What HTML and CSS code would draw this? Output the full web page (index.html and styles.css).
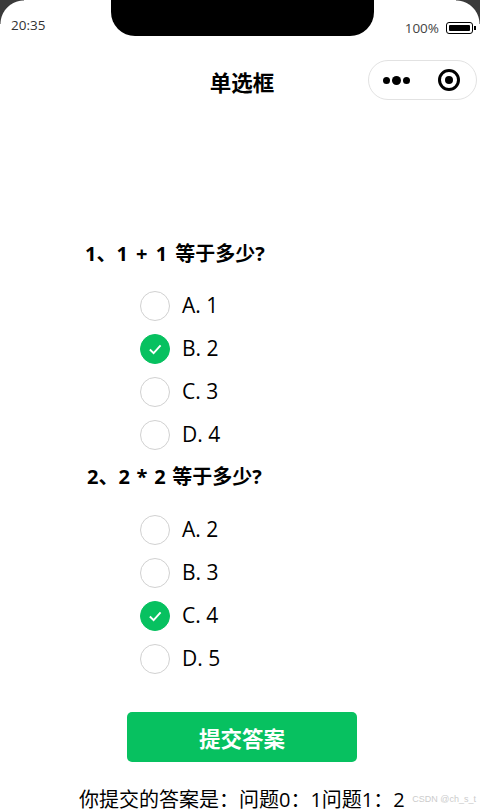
FILE: index.html
```html
<!DOCTYPE html>
<html lang="zh-CN">
<head>
    <meta charset="UTF-8">
    <meta name="viewport" content="width=device-width, initial-scale=1.0">
    <title>单选框</title>
    <link rel="stylesheet" href="styles.css">
</head>
<body>
    <div class="phone">
        <div class="status-bar">
            <span class="time">20:35</span>
            <div class="notch"></div>
            <div class="battery-box">
                <span class="percent">100%</span>
                <span class="battery"><span class="battery-level"></span></span>
                <span class="battery-tip"></span>
            </div>
        </div>

        <div class="nav-bar">
            <h1 class="nav-title">单选框</h1>
            <div class="capsule">
                <div class="dots">
                    <span class="dot"></span>
                    <span class="dot dot-big"></span>
                    <span class="dot"></span>
                </div>
                <div class="target"><span class="target-inner"></span></div>
            </div>
        </div>

        <div class="quiz">
            <h2 class="question q-one">1、1 + 1 等于多少?</h2>
            <div class="options">
                <div class="option"><span class="radio"></span><span class="label">A. 1</span></div>
                <div class="option">
                    <span class="radio radio-on">
                        <svg viewBox="0 0 30 30" class="check"><path d="M9.5 15.5l4 4 7.5-8.5"/></svg>
                    </span>
                    <span class="label">B. 2</span>
                </div>
                <div class="option"><span class="radio"></span><span class="label">C. 3</span></div>
                <div class="option"><span class="radio"></span><span class="label">D. 4</span></div>
            </div>

            <h2 class="question q-two">2、2 * 2 等于多少?</h2>
            <div class="options">
                <div class="option"><span class="radio"></span><span class="label">A. 2</span></div>
                <div class="option"><span class="radio"></span><span class="label">B. 3</span></div>
                <div class="option">
                    <span class="radio radio-on">
                        <svg viewBox="0 0 30 30" class="check"><path d="M9.5 15.5l4 4 7.5-8.5"/></svg>
                    </span>
                    <span class="label">C. 4</span>
                </div>
                <div class="option"><span class="radio"></span><span class="label">D. 5</span></div>
            </div>
        </div>

        <button class="submit">提交答案</button>
        <p class="answer">你提交的答案是：问题0：1问题1：2</p>
        <span class="watermark">CSDN @ch_s_t</span>
    </div>
</body>
</html>
```

FILE: styles.css
```css
* {
    box-sizing: border-box;
}
html, body {
    margin: 0;
    padding: 0;
}
body {
    width: 480px;
    height: 810px;
    overflow: hidden;
    font-family: "Open Sans", "Noto Sans CJK SC", sans-serif;
    background-color: #fff;
    color: #000;
}
.phone {
    position: relative;
    width: 480px;
    height: 810px;
    overflow: hidden;
}
.phone::before, .phone::after {
    content: "";
    position: absolute;
    top: 0;
    width: 24px;
    height: 24px;
}
.phone::before {
    left: 0;
    background: radial-gradient(circle at 100% 100%, transparent 23px, #3a3a3a 24px);
}
.phone::after {
    right: 0;
    background: radial-gradient(circle at 0 100%, transparent 23px, #3a3a3a 24px);
}
.status-bar {
    display: flex;
    justify-content: space-between;
    height: 36px;
    padding: 0 4px 0 11px;
}
.time {
    font-size: 13.5px;
    line-height: 19px;
    margin-top: 16px;
    color: #333;
}
.notch {
    position: absolute;
    top: 0;
    left: 111px;
    width: 263px;
    height: 36px;
    background-color: #000;
    border-radius: 0 0 24px 24px;
}
.battery-box {
    display: flex;
    align-items: center;
    height: 16px;
    margin-top: 20px;
}
.percent {
    font-size: 13.5px;
    color: #444;
    margin-right: 7px;
}
.battery {
    display: block;
    width: 27px;
    height: 12px;
    padding: 2px;
    border: 1px solid #000;
    border-radius: 3px;
}
.battery-level {
    display: block;
    height: 100%;
    background-color: #000;
    border-radius: 1px;
}
.battery-tip {
    width: 2px;
    height: 4px;
    margin-left: 1px;
    background-color: #000;
}
.nav-bar {
    display: flex;
    justify-content: center;
    align-items: center;
    position: relative;
    height: 64px;
    padding: 30px 0 0 4px;
}
.nav-title {
    margin: 0;
    font-size: 21.5px;
    font-weight: 700;
    line-height: 24px;
}
.capsule {
    position: absolute;
    top: 24px;
    right: 3px;
    display: flex;
    align-items: center;
    justify-content: space-between;
    width: 109px;
    height: 40px;
    padding: 0 16px 0 14px;
    border: 1px solid #e2e2e2;
    border-radius: 20px;
}
.dots {
    display: flex;
    align-items: center;
    gap: 2px;
}
.dot {
    width: 7px;
    height: 7px;
    background-color: #000;
    border-radius: 50%;
}
.dot-big {
    width: 9px;
    height: 9px;
}
.target {
    display: flex;
    align-items: center;
    justify-content: center;
    width: 22px;
    height: 22px;
    border: 3px solid #000;
    border-radius: 50%;
}
.target-inner {
    width: 8px;
    height: 8px;
    background-color: #000;
    border-radius: 50%;
}
.quiz {
    padding-top: 140px;
}
.question {
    margin: 0;
    font-size: 20px;
    font-weight: 700;
    line-height: 28px;
    white-space: pre;
}
.q-one {
    padding-left: 85px;
    word-spacing: 3px;
}
.q-two {
    padding-left: 87px;
    word-spacing: 1.5px;
}
.options {
    display: flex;
    flex-direction: column;
    gap: 13px;
    padding: 23px 0 13px 140px;
}
.q-two + .options {
    padding-top: 24px;
}
.option {
    display: flex;
    align-items: center;
    gap: 12px;
    height: 30px;
    font-size: 21px;
}
.label {
    line-height: 26px;
    padding-bottom: 2px;
}
.radio {
    display: block;
    width: 30px;
    height: 30px;
    border: 1px solid #d1d1d1;
    border-radius: 50%;
}
.radio-on {
    border-color: #07c160;
    background-color: #07c160;
}
.check {
    display: block;
    width: 28px;
    height: 28px;
    fill: none;
    stroke: #fff;
    stroke-width: 2;
}
.submit {
    display: block;
    width: 230px;
    height: 50px;
    margin: 25px 0 0 127px;
    padding: 0;
    border: none;
    border-radius: 5px;
    background-color: #07c160;
    color: #fff;
    font-family: inherit;
    font-size: 21.5px;
    font-weight: 700;
}
.answer {
    margin: 28px 0 0 79px;
    font-size: 20px;
    line-height: 20px;
    white-space: nowrap;
}
.watermark {
    position: absolute;
    right: 4px;
    bottom: 6px;
    font-family: "Liberation Sans", sans-serif;
    font-size: 9px;
    color: #ccc;
}
```
